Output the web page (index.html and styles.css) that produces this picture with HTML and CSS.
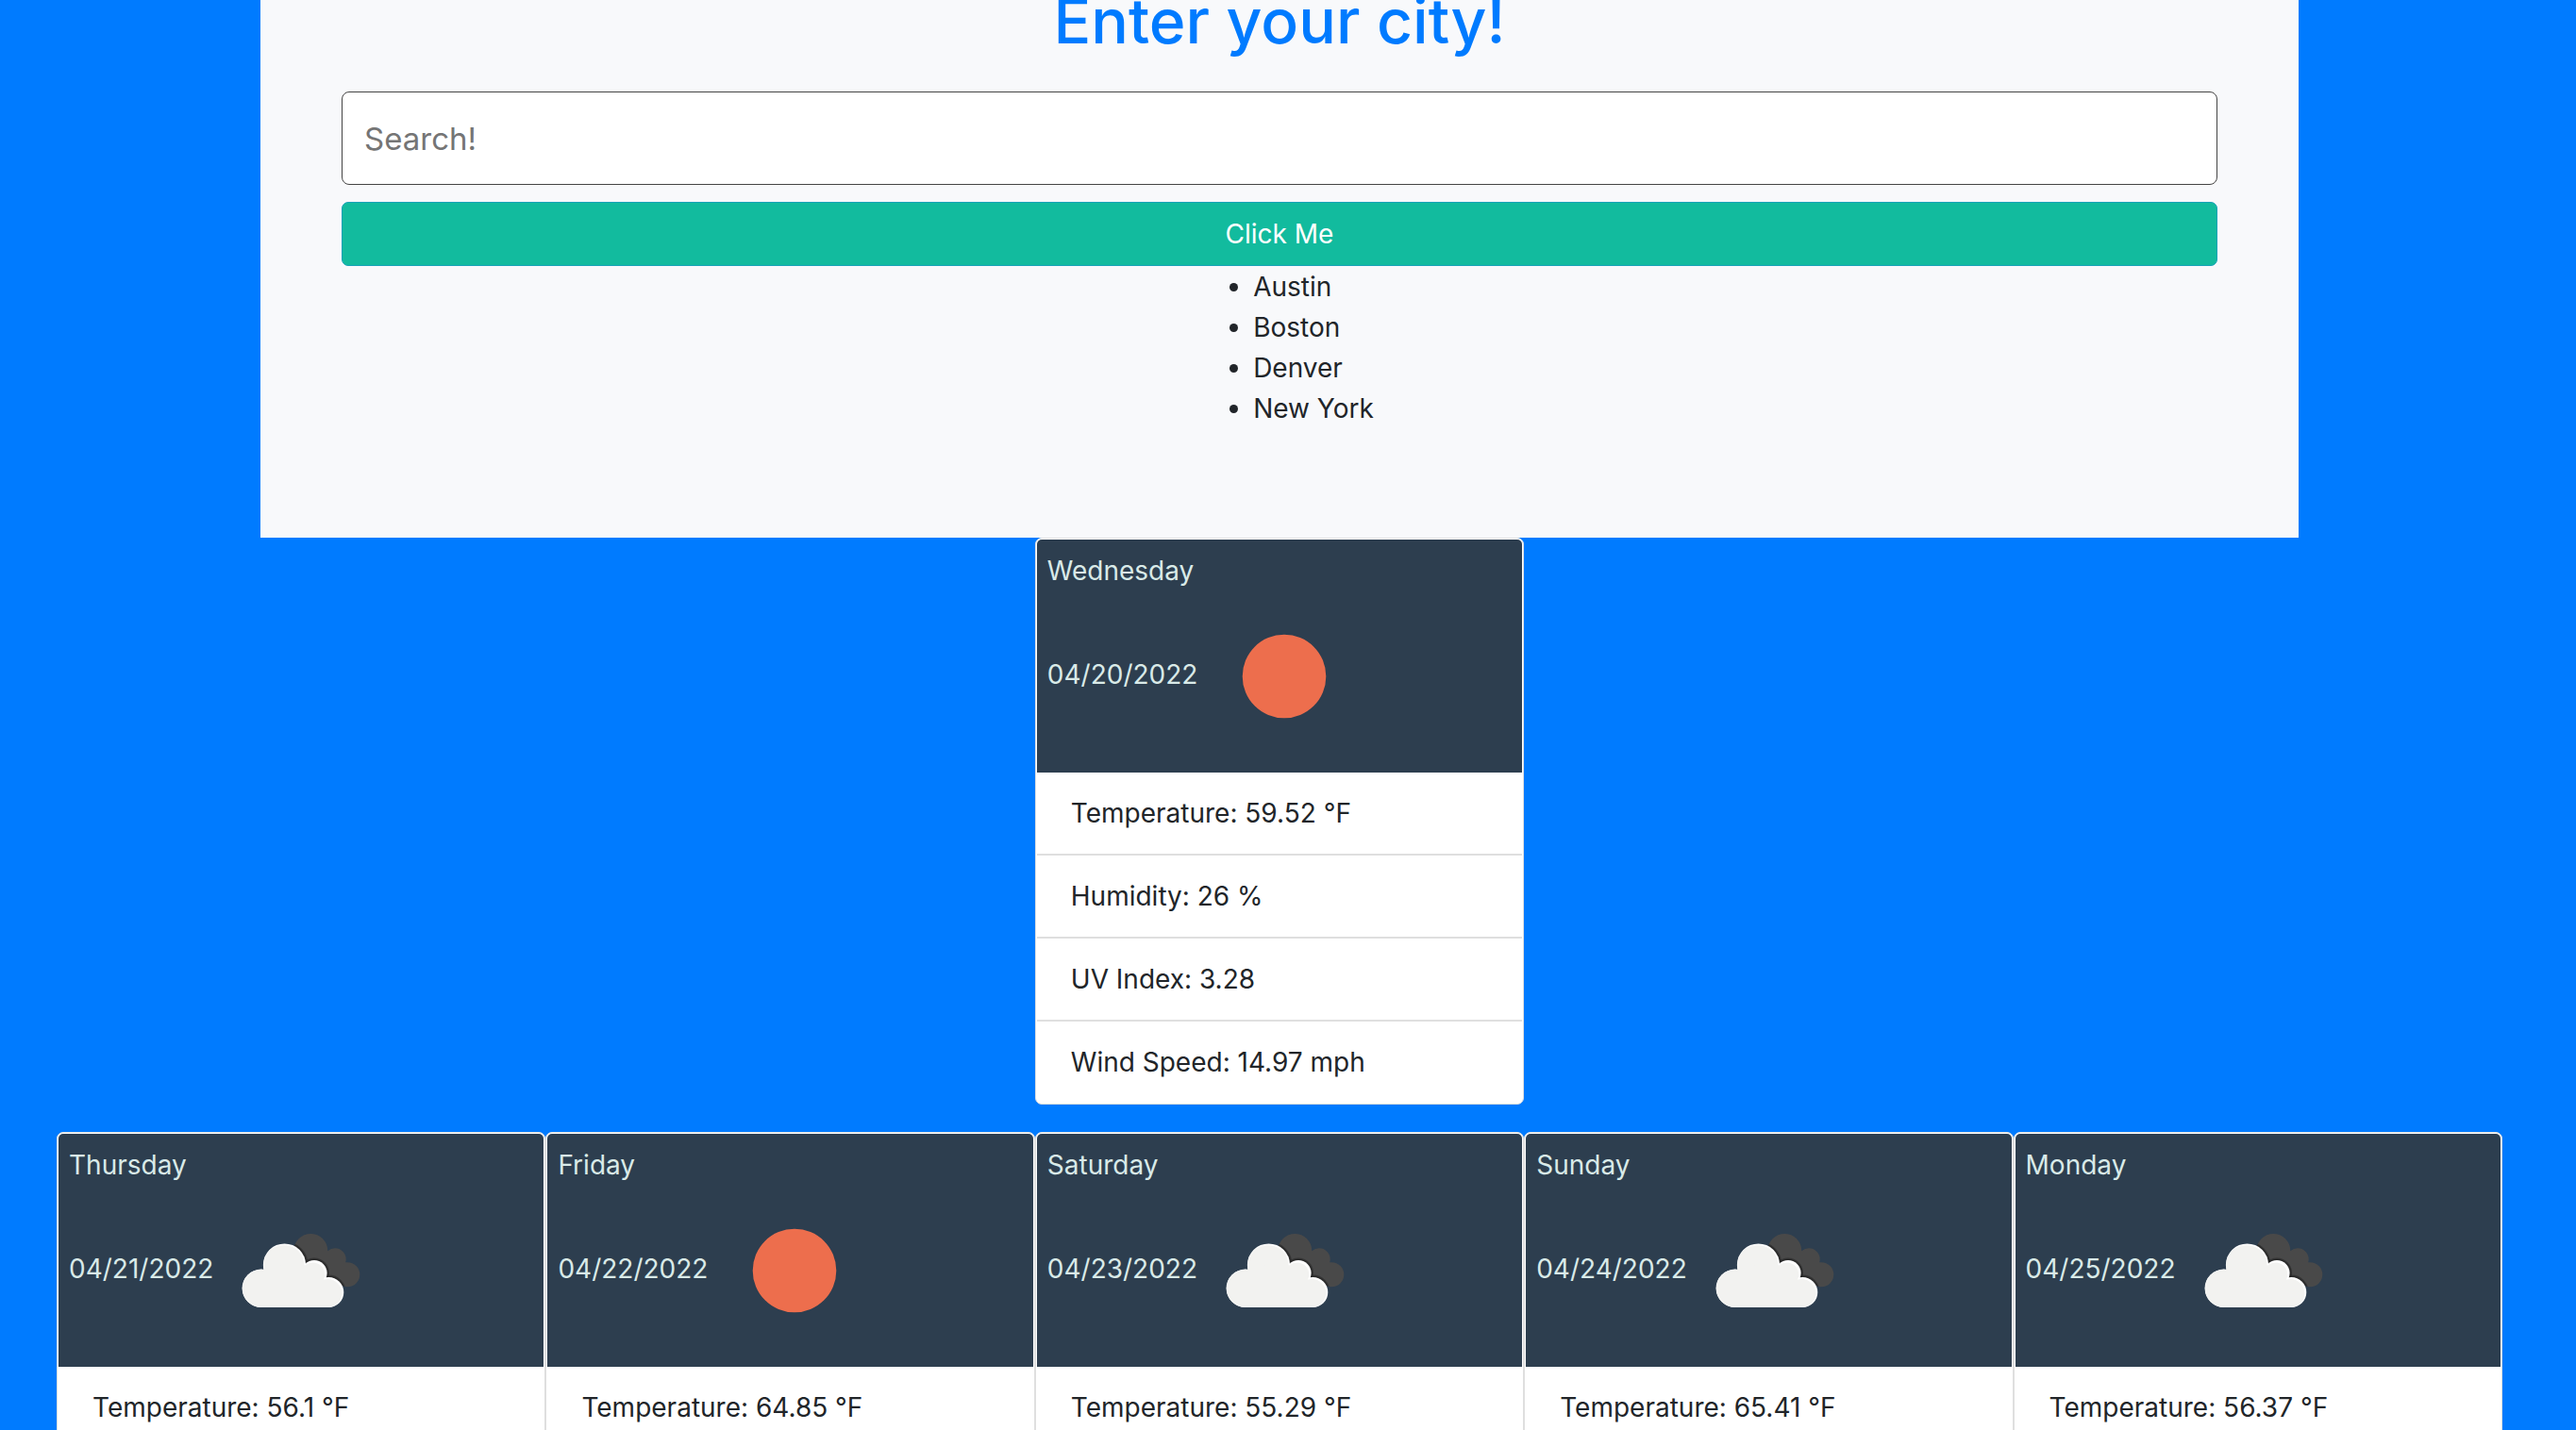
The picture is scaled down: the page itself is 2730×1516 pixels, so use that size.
FILE: index.html
```html
<!DOCTYPE html>
<html lang="en">
<head>
<meta charset="utf-8">
<title>Weather Dashboard</title>
<link rel="stylesheet" href="styles.css">
</head>
<body>
<svg class="sprite" width="0" height="0" aria-hidden="true">
  <defs>
    <clipPath id="back-cloud">
      <circle cx="101.3" cy="69" r="18"/>
      <circle cx="127" cy="78" r="11.7"/>
      <circle cx="140.3" cy="94.2" r="13"/>
      <path d="M88 80 L118 74 L136 84 L138 107 L120 100 Z"/>
    </clipPath>
    <symbol id="sun" viewBox="0 0 180 180">
      <circle cx="90" cy="90" r="44.3" fill="#ed6e4d"/>
    </symbol>
    <symbol id="clouds" viewBox="0 0 180 180">
      <g clip-path="url(#back-cloud)">
        <rect x="70" y="45" width="90" height="70" fill="#494949"/>
        <g fill="none" stroke="#222" stroke-opacity="0.5">
          <g stroke-width="5">
            <circle cx="73.5" cy="84" r="22.6"/>
            <circle cx="105" cy="92.6" r="13.6"/>
            <circle cx="120.3" cy="113" r="16"/>
          </g>
          <g stroke-width="3">
            <circle cx="73.5" cy="84" r="22.6"/>
            <circle cx="105" cy="92.6" r="13.6"/>
            <circle cx="120.3" cy="113" r="16"/>
          </g>
        </g>
      </g>
      <g fill="#fff">
        <circle cx="73.5" cy="84" r="22.6"/>
        <circle cx="48.8" cy="108.8" r="20.2"/>
        <circle cx="105" cy="92.6" r="13.6"/>
        <circle cx="120.3" cy="113" r="16"/>
      </g>
      <g fill="#f2f2f0">
        <circle cx="72.8" cy="84.6" r="21.8"/>
        <circle cx="48.8" cy="108.8" r="20"/>
        <circle cx="103.6" cy="94" r="12.6"/>
        <circle cx="119.3" cy="114" r="15"/>
        <path d="M48.8 129 V90 L70 84 H94 L114 98 L120.3 129 Z"/>
      </g>
    </symbol>
  </defs>
</svg>

<main class="page">
  <section class="search">
    <h1 class="search-title">Enter your city!</h1>
    <form class="search-form">
      <input class="search-input" type="text" placeholder="Search!" aria-label="City">
      <button class="search-button" type="button">Click Me</button>
    </form>
    <ul class="cities">
      <li>Austin</li>
      <li>Boston</li>
      <li>Denver</li>
      <li>New York</li>
    </ul>
  </section>

  <section class="days today">
    <article class="card">
      <header class="card-head">
        <p class="day">Wednesday</p>
        <p class="date">04/20/2022<svg class="icon" role="img" aria-label="Clear"><use href="#sun"/></svg></p>
      </header>
      <ul class="facts">
        <li>Temperature: 59.52 °F</li>
        <li>Humidity: 26 %</li>
        <li>UV Index: 3.28</li>
        <li>Wind Speed: 14.97 mph</li>
      </ul>
    </article>
  </section>

  <section class="days forecast">
    <article class="card">
      <header class="card-head">
        <p class="day">Thursday</p>
        <p class="date">04/21/2022<svg class="icon" role="img" aria-label="Clouds"><use href="#clouds"/></svg></p>
      </header>
      <ul class="facts"><li>Temperature: 56.1 °F</li></ul>
    </article>
    <article class="card">
      <header class="card-head">
        <p class="day">Friday</p>
        <p class="date">04/22/2022<svg class="icon" role="img" aria-label="Clear"><use href="#sun"/></svg></p>
      </header>
      <ul class="facts"><li>Temperature: 64.85 °F</li></ul>
    </article>
    <article class="card">
      <header class="card-head">
        <p class="day">Saturday</p>
        <p class="date">04/23/2022<svg class="icon" role="img" aria-label="Clouds"><use href="#clouds"/></svg></p>
      </header>
      <ul class="facts"><li>Temperature: 55.29 °F</li></ul>
    </article>
    <article class="card">
      <header class="card-head">
        <p class="day">Sunday</p>
        <p class="date">04/24/2022<svg class="icon" role="img" aria-label="Clouds"><use href="#clouds"/></svg></p>
      </header>
      <ul class="facts"><li>Temperature: 65.41 °F</li></ul>
    </article>
    <article class="card">
      <header class="card-head">
        <p class="day">Monday</p>
        <p class="date">04/25/2022<svg class="icon" role="img" aria-label="Clouds"><use href="#clouds"/></svg></p>
      </header>
      <ul class="facts"><li>Temperature: 56.37 °F</li></ul>
    </article>
  </section>
</main>
</body>
</html>
```
FILE: styles.css
```css
* {
  box-sizing: border-box;
}

html {
  height: 100%;
  background: #007bff;
}

body {
  height: 100%;
  margin: 0;
  overflow: hidden;
  color: #212529;
  font-family: Inter, "Liberation Sans", sans-serif;
  font-size: 28px;
  line-height: 43px;
}

h1,
p,
ul {
  margin: 0;
  padding: 0;
}

.sprite {
  display: block;
}

.page {
  padding-right: 18px;
}

/* Search panel */
.search {
  max-width: 2160px;
  margin: 0 auto;
  padding: 0 86px 115px;
  background: #f8f9fb;
}

.search-title {
  padding-bottom: 52px;
  color: #007bff;
  font-size: 66px;
  font-weight: 500;
  line-height: 45px;
  text-align: center;
}

.search-form {
  display: flex;
  flex-direction: column;
  gap: 18px;
}

.search-input {
  width: 100%;
  height: 99px;
  padding: 0 23px;
  border: 1px solid #444;
  border-radius: 8px;
  background: #fff;
  color: #495057;
  font: inherit;
  font-size: 33px;
}

.search-input::placeholder {
  color: #757575;
  opacity: 1;
}

.search-button {
  width: 100%;
  height: 68px;
  padding: 0;
  border: 1px solid #17a2b8;
  border-radius: 7px;
  background: #12bb9e;
  color: #fff;
  font: inherit;
}

.cities {
  width: fit-content;
  margin: 0 auto;
  padding: 1px 0 0 72px;
}

/* Day cards */
.days {
  display: flex;
  justify-content: center;
  padding: 0 60px 29px;
}

.card {
  flex: 0 0 20%;
  padding: 1px;
  border: 1px solid #dfdfdf;
  border-radius: 7px;
  background: #fff;
}

.card-head {
  padding: 11px 11px 12px;
  border-radius: 5px 5px 0 0;
  background: #2d3e4f;
  color: #d9eae8;
}

.day {
  height: 44px;
  padding-top: 1px;
}

.icon {
  width: 180px;
  height: 180px;
  margin-left: 2px;
  vertical-align: middle;
}

.facts {
  list-style: none;
}

.facts li {
  padding: 22px 36px 21px;
  border-bottom: 2px solid #dfdfdf;
}

.facts li:last-child {
  border-bottom: 0;
}
```
